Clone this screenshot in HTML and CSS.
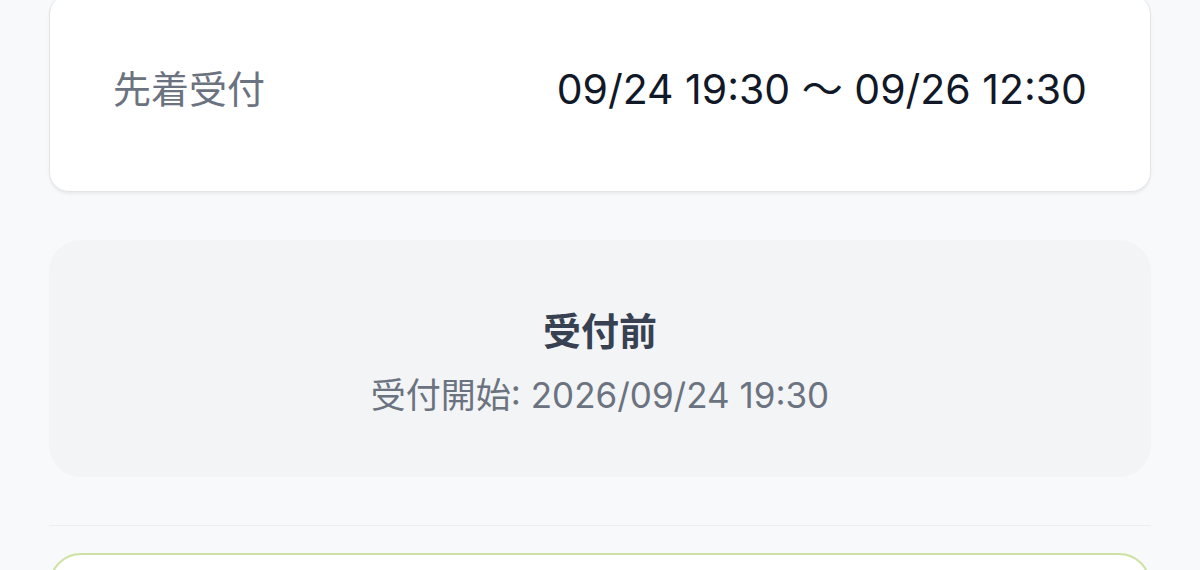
FILE: index.html
```html
<!DOCTYPE html>
<html lang="ja">
<head>
  <meta charset="UTF-8">
  <title>受付状況</title>
  <link rel="stylesheet" href="styles.css">
</head>
<body>

<div class="page">
  <div class="period-card">
    <span class="period-label">先着受付</span>
    <span class="period-value">09/24 19:30 〜 09/26 12:30</span>
  </div>

  <div class="status-box">
    <div class="status-title">受付前</div>
    <div class="status-sub">受付開始: 2026/09/24 19:30</div>
  </div>

  <hr class="divider">

  <div class="entry-card"></div>
</div>

</body>
</html>
```

FILE: styles.css
```css
body {
  margin: 0;
  background-color: #f8f9fb;
  font-family: Inter, "Noto Sans CJK JP", sans-serif;
  color: #111827;
}

.page {
  padding: 0 49px;
  margin-top: -6px;
}

.period-card {
  display: flex;
  align-items: center;
  justify-content: space-between;
  height: 198px;
  box-sizing: border-box;
  padding: 0 63px 14px;
  background-color: #fff;
  border: 1px solid #e3e5e9;
  border-radius: 20px;
  box-shadow: 0 2px 3px rgba(0,0,0,0.06);
}

.period-label {
  font-size: 38px;
  color: #6b7280;
}

.period-value {
  font-size: 41px;
  color: #111827;
}

.status-box {
  margin-top: 48px;
  height: 237px;
  box-sizing: border-box;
  padding-top: 67px;
  background-color: #f3f4f6;
  border-radius: 32px;
  text-align: center;
}

.status-title {
  font-size: 38px;
  font-weight: 700;
  line-height: 48px;
  color: #374151;
}

.status-sub {
  margin-top: 18px;
  font-size: 35px;
  line-height: 44px;
  color: #6b7280;
}

.divider {
  margin: 48px 0 27px;
  border: none;
  border-top: 1px solid #eceef1;
}

.entry-card {
  height: 120px;
  background-color: #fff;
  border: 2px solid #cde2a0;
  border-radius: 32px;
}
```
